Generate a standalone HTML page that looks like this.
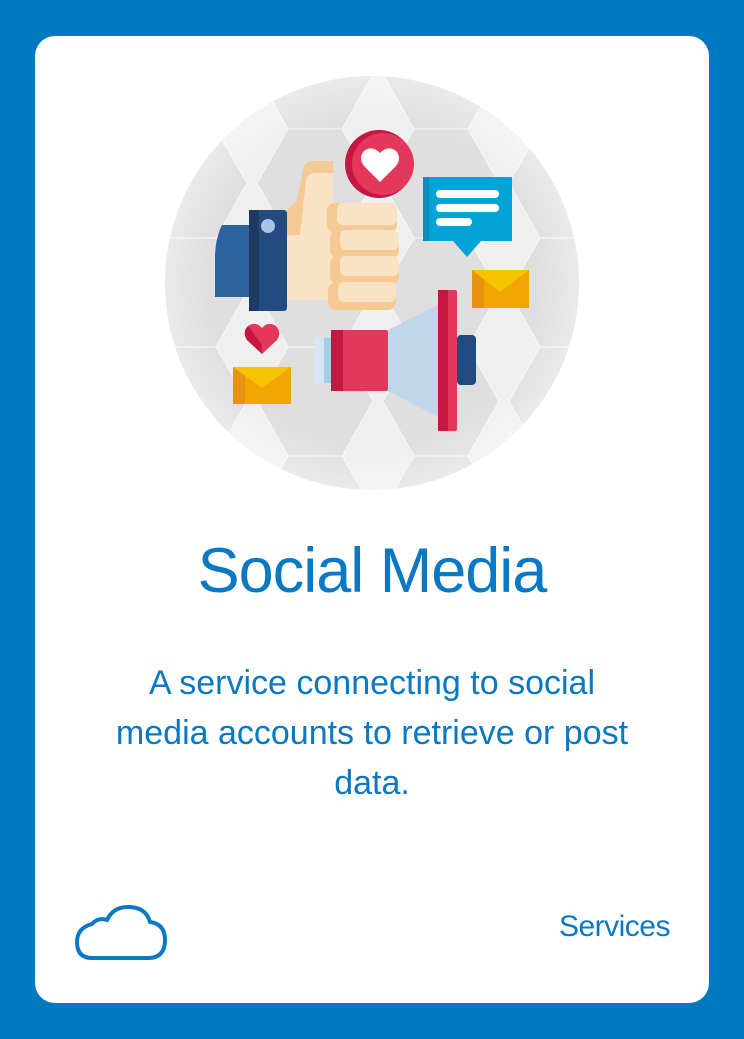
<!DOCTYPE html>
<html><head><meta charset="utf-8"><style>
html,body{margin:0;padding:0}
body{width:744px;height:1039px;background:#0079c1;position:relative;overflow:hidden;font-family:"Liberation Sans",sans-serif;color:#0a78c2}
.card{position:absolute;left:35px;top:36px;width:674px;height:967px;background:#fff;border-radius:20px}
.t{position:absolute;left:0;width:744px;text-align:center}
</style></head><body>
<div class="card"></div>
<svg style="position:absolute;left:0;top:0" width="744" height="1039" viewBox="0 0 744 1039">
<defs>
<clipPath id="c"><circle cx="372" cy="283" r="207"/></clipPath>
<pattern id="hx" x="0" y="20" width="126" height="109" patternUnits="userSpaceOnUse">
<rect width="126" height="109" fill="#efefef"/>
<polygon points="5,54 36,0 90,0 121,54 90,109 36,109" fill="#e0dfe0" stroke="#f8f8f8" stroke-width="1"/>
</pattern>
<radialGradient id="fade" cx="372" cy="283" r="207" gradientUnits="userSpaceOnUse">
<stop offset="0.8" stop-color="#fff" stop-opacity="0"/><stop offset="1" stop-color="#fff" stop-opacity="0.35"/>
</radialGradient>
</defs>
<g clip-path="url(#c)">
<rect x="160" y="70" width="430" height="430" fill="url(#hx)"/>
<rect x="160" y="70" width="430" height="430" fill="url(#fade)"/>
</g>
<path d="M222,225 L249,225 L249,297 L215,297 L215,255 Q216,236 222,225Z" fill="#2d64a0"/>
<rect x="249" y="210" width="38" height="101" rx="3" fill="#224b80"/>
<rect x="249" y="210" width="10" height="101" fill="#1e3a63"/>
<circle cx="268" cy="226" r="7" fill="#a8c4e2"/>
<path d="M287,210 L297,200 L303,170 Q305,161 314,161 L333,161 L333,300 L287,300Z" fill="#f5c993"/>
<path d="M287,235 L300,235 L306,180 Q308,173 316,173 L333,173 L333,300 L287,300Z" fill="#fae3c4"/>
<g fill="#f5c993">
<rect x="327" y="203" width="70" height="30" rx="8"/><rect x="330" y="230" width="69" height="28" rx="8"/>
<rect x="330" y="256" width="69" height="28" rx="8"/><rect x="328" y="282" width="68" height="28" rx="8"/>
</g>
<g fill="#fae3c4">
<rect x="337" y="203" width="60" height="22" rx="6"/><rect x="340" y="230" width="59" height="20" rx="6"/>
<rect x="340" y="256" width="59" height="20" rx="6"/><rect x="338" y="282" width="58" height="20" rx="6"/>
</g>
<circle cx="379" cy="164" r="34" fill="#c5173f"/>
<circle cx="383" cy="164" r="31" fill="#e3385b"/>
<path d="M380,182 L364,166 Q358,158 364,151 Q372,145 380,153 Q388,145 396,151 Q402,158 396,166Z" fill="#fff"/>
<path d="M423,177 L512,177 L512,241 L481,241 L467,257 L453,241 L423,241Z" fill="#02a3d6"/>
<rect x="423" y="177" width="6" height="64" fill="#0a8ebd"/>
<g fill="#fff"><rect x="436" y="190" width="63" height="8" rx="4"/><rect x="436" y="204" width="63" height="8" rx="4"/><rect x="436" y="218" width="36" height="8" rx="4"/></g>
<rect x="472" y="270" width="57" height="38" fill="#f1a606"/><rect x="472" y="270" width="12" height="38" fill="#e7930f"/>
<path d="M472,270 L529,270 L500,292Z" fill="#f6c400"/>
<rect x="233" y="367" width="58" height="37" fill="#f1a606"/><rect x="233" y="367" width="12" height="37" fill="#e7930f"/>
<path d="M233,367 L291,367 L262,388Z" fill="#f6c400"/>
<path d="M262,354 L247,340 Q242,332 248,326 Q256,321 262,328 Q268,321 276,326 Q282,332 277,340Z" fill="#e3385b"/>
<path d="M262,354 L247,340 Q242,332 248,326 L262,345Z" fill="#c5173f"/>
<rect x="314" y="338" width="18" height="45" fill="#d6e6f4"/><rect x="324" y="338" width="8" height="45" fill="#a8cbe8"/>
<path d="M388,330 L438,305 L438,417 L388,391Z" fill="#c0d6ea"/>
<rect x="331" y="330" width="57" height="61" rx="2" fill="#e3385b"/><rect x="331" y="330" width="12" height="61" fill="#c5173f"/>
<rect x="457" y="335" width="19" height="50" rx="4" fill="#224b80"/>
<rect x="438" y="290" width="19" height="141" rx="2" fill="#e3385b"/><rect x="438" y="290" width="10" height="141" fill="#c5173f"/>
<path d="M92,958 L148,958 Q165,958 165,940 Q165,924 150,922 Q146,907 128,907 Q113,907 107,920 Q98,917 92,924 Q77,928 77,942 Q77,958 92,958Z" fill="none" stroke="#0a78c2" stroke-width="4"/>
</svg>
<div class="t" style="top:533px;font-size:63px;letter-spacing:-1px;line-height:76px">Social Media</div>
<div class="t" style="top:658px;font-size:34px;line-height:50px;letter-spacing:0px">A service connecting to social<br>media accounts to retrieve or post<br>data.</div>
<div style="position:absolute;right:74px;top:910px;font-size:30px;letter-spacing:-0.5px">Services</div>
</body></html>
